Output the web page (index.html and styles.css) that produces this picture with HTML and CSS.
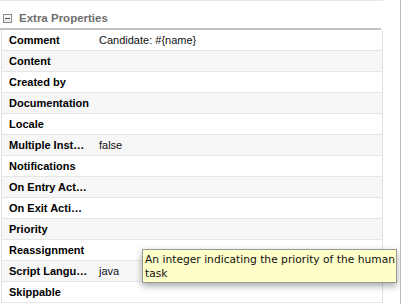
FILE: index.html
```html
<!DOCTYPE html>
<html>
<head>
<meta charset="utf-8">
<link rel="stylesheet" href="styles.css">
</head>
<body>
<div class="panel">
  <div class="inner">
    <div class="section-head">
      <span class="toggle"><span class="minus"></span></span>
      <span class="title">Extra Properties</span>
    </div>
    <div class="props">
      <div class="row"><div class="key">Comment</div><div class="val">Candidate: #{name}</div></div>
      <div class="row"><div class="key">Content</div><div class="val"></div></div>
      <div class="row"><div class="key">Created by</div><div class="val"></div></div>
      <div class="row"><div class="key">Documentation</div><div class="val"></div></div>
      <div class="row"><div class="key">Locale</div><div class="val"></div></div>
      <div class="row"><div class="key">Multiple Inst…</div><div class="val">false</div></div>
      <div class="row"><div class="key">Notifications</div><div class="val"></div></div>
      <div class="row"><div class="key">On Entry Act…</div><div class="val"></div></div>
      <div class="row"><div class="key">On Exit Acti…</div><div class="val"></div></div>
      <div class="row"><div class="key">Priority</div><div class="val"></div></div>
      <div class="row"><div class="key">Reassignment</div><div class="val"></div></div>
      <div class="row"><div class="key">Script Langu…</div><div class="val">java</div></div>
      <div class="row"><div class="key">Skippable</div><div class="val"></div></div>
    </div>
  </div>
  <div class="tooltip">An integer indicating the priority of the human<br>task</div>
</div>
</body>
</html>
```
FILE: styles.css
```css
html, body {
  margin: 0;
  padding: 0;
  background: #ffffff;
}
.panel {
  position: relative;
  width: 400px;
  height: 304px;
  border-right: 1px solid #bcbcbc;
  overflow: hidden;
  font-family: "Liberation Sans", Arial, sans-serif;
  font-size: 11px;
  color: #000;
}
.inner {
  width: 383px;
  border-top: 1px solid #e8e8e8;
}
.section-head {
  width: 378px;
  height: 27px;
  box-sizing: content-box;
  padding: 0 0 0 3px;
  border-bottom: 2px solid #c2c2c2;
  display: flex;
  align-items: center;
  padding-top: 0;
}
.section-head .toggle {
  margin-top: 7px;
  width: 7px;
  height: 7px;
  border: 1px solid #8a8a8a;
  background: linear-gradient(#ffffff, #e6e6e6);
  display: flex;
  align-items: center;
  justify-content: center;
}
.section-head .minus {
  width: 5px;
  height: 1px;
  background: #4a4a4a;
}
.section-head .title {
  margin-left: 7px;
  margin-top: 6px;
  font-weight: bold;
  font-size: 11.5px;
  color: #6e6e6e;
}
.props {
  margin-left: 1px;
  width: 382px;
  box-sizing: border-box;
  border-left: 1px solid #e0e0e0;
  border-right: 1px solid #e0e0e0;
}
.row {
  display: grid;
  grid-template-columns: 97px 1fr;
  height: 20px;
  line-height: 20px;
  border-bottom: 1px solid #e6e6e6;
}
.row:nth-child(even) {
  background: #f7f7f7;
}
.key {
  padding-left: 7px;
  font-weight: bold;
  white-space: nowrap;
  overflow: hidden;
}
.val {
  color: #111;
  white-space: nowrap;
}
.tooltip {
  position: absolute;
  left: 142px;
  top: 249px;
  width: 255px;
  height: 34px;
  box-sizing: border-box;
  padding: 3px 2px 2px 2px;
  background: #fefec9;
  border: 1px solid #9a9a9a;
  box-shadow: 0 3px 7px rgba(0, 0, 0, 0.35);
  font-family: "DejaVu Sans", sans-serif;
  font-size: 10.7px;
  line-height: 13.5px;
  color: #111;
  white-space: nowrap;
}
```
